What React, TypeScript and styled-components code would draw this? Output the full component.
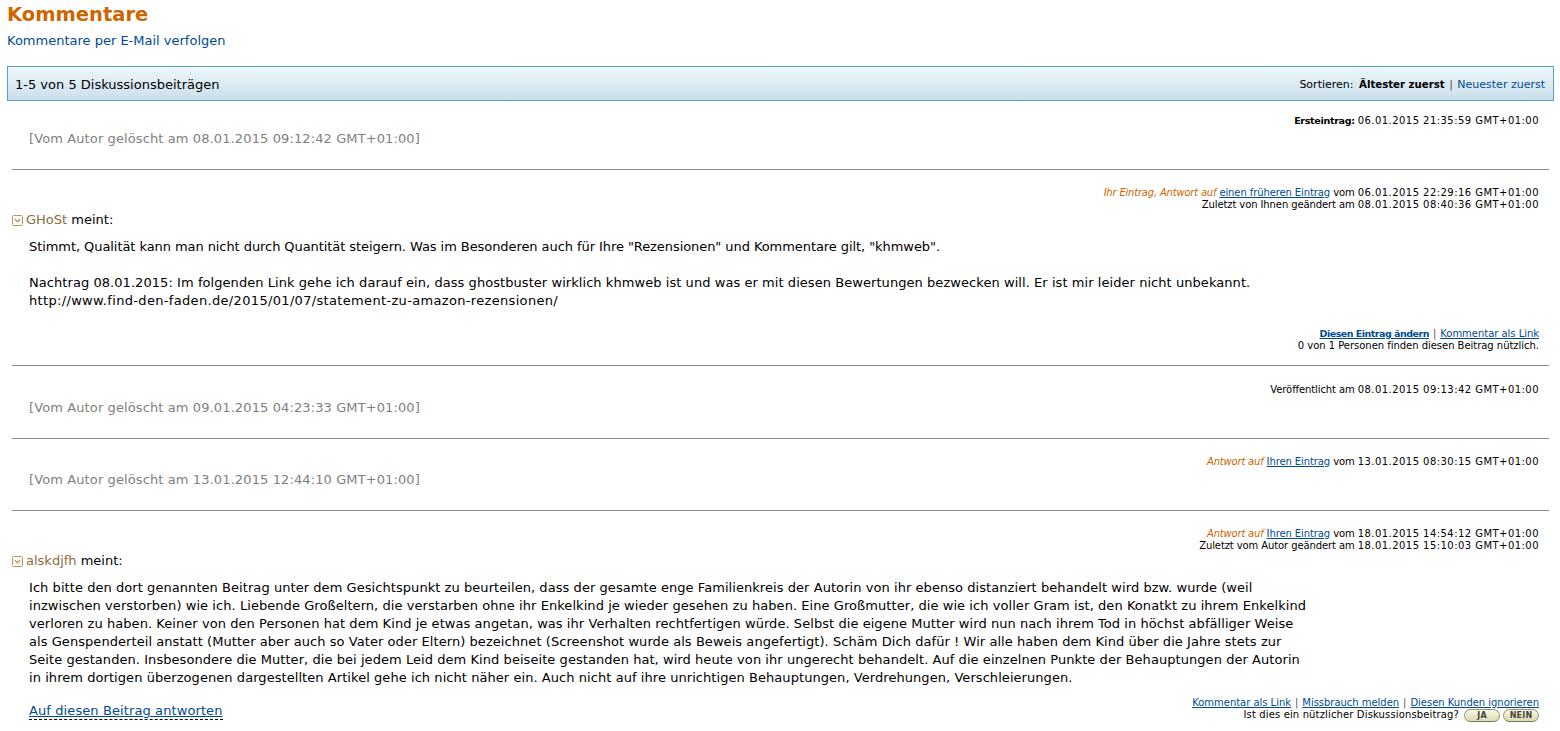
import React from "react";
import styled, { createGlobalStyle } from "styled-components";

const Global = createGlobalStyle`
  html, body { margin: 0; padding: 0; background: #fff; }
  body { font-family: "DejaVu Sans", Verdana, sans-serif; color: #000; }
  a { color: #004b91; }
`;

const Page = styled.div`
  width: 1560px;
  height: 731px;
  overflow: hidden;
  box-sizing: border-box;
  padding: 0 6px 0 7px;
`;

const Title = styled.h1`
  margin: 0;
  padding-top: 2px;
  height: 25px;
  font-size: 19.5px;
  line-height: 25px;
  font-weight: bold;
  color: #cc6600;
`;

const Follow = styled.a`
  display: block;
  margin-top: 6px;
  height: 16px;
  font-size: 13px;
  line-height: 16px;
  text-decoration: none;
`;

const Bar = styled.div`
  margin-top: 17px;
  height: 33px;
  box-sizing: content-box;
  border: 1px solid #5a9fc8;
  background: linear-gradient(#eef8fd, #c9deeb);
  padding: 2px 8px 0 7px;
  height: 31px;
  display: flex;
  align-items: center;
  justify-content: space-between;
  font-size: 13px;
  line-height: 16px;
`;

const Sort = styled.div`
  font-size: 11px;
  b { margin-left: 2px; font-size: 10.2px; }
  a { text-decoration: none; }
`;

const Sep = styled.span<{ $gap: number }>`
  color: #555;
  margin: 0 ${(p) => p.$gap}px;
`;

const Post = styled.section<{ $h: number }>`
  margin: 0 5px;
  padding: 0 10px 0 0;
  height: ${(p) => p.$h}px;
  box-sizing: border-box;
  border-bottom: 1px solid #888;
  display: flex;
  flex-direction: column;
  &:last-child { border-bottom: 0; }
`;

const Meta = styled.div<{ $top: number }>`
  margin-top: ${(p) => p.$top}px;
  text-align: right;
  font-size: 10px;
  line-height: 12px;
  letter-spacing: -0.1px;
  a { color: #004b91; }
  b { font-size: 9.5px; letter-spacing: -0.3px; }
`;

const Stamp = styled.span`
  letter-spacing: 0.45px;
`;

const Reply = styled.i`
  color: #cc6600;
  letter-spacing: -0.2px;
`;

const Deleted = styled.div`
  margin: 4px 0 0 17px;
  font-size: 13px;
  line-height: 16px;
  letter-spacing: 0.11px;
  color: #808080;
`;

const Author = styled.div`
  display: flex;
  align-items: center;
  gap: 3px;
  height: 16px;
  margin-top: 1px;
  font-size: 13px;
  line-height: 16px;
`;

const Name = styled.span`
  color: #8f6b3c;
`;

const Toggle = styled.svg`
  width: 11px;
  height: 11px;
  flex: none;
`;

const Body = styled.div`
  margin: 10px 0 0 17px;
  font-size: 13px;
  line-height: 18px;
  letter-spacing: 0.06px;
  white-space: pre-line;
`;

const Tuned = styled.span<{ $ls: number }>`
  letter-spacing: ${(p) => p.$ls}px;
`;

const Actions = styled.div<{ $top: number }>`
  margin-top: ${(p) => p.$top}px;
  text-align: right;
  font-size: 10px;
  line-height: 12px;
  letter-spacing: -0.03px;
  b { font-size: 9.5px; letter-spacing: -0.5px; }
`;

const Footer = styled.div`
  display: flex;
  justify-content: space-between;
  align-items: flex-start;
  margin-top: 10px;
`;

const Answer = styled.a`
  margin: 6px 0 0 17px;
  font-size: 13px;
  line-height: 16px;
  letter-spacing: 0.1px;
  border-bottom: 1px dashed #000;
  height: 16px;
`;

const Vote = styled.button<{ $ml: number }>`
  display: inline-block;
  box-sizing: border-box;
  width: 36px;
  height: 13px;
  padding: 0;
  margin-left: ${(p) => p.$ml}px;
  border: 1px solid #9a9a78;
  border-bottom-color: #77775a;
  border-radius: 7px;
  background: linear-gradient(#faf9e2, #dcdab0);
  font: bold 8px/11px "DejaVu Sans", sans-serif;
  letter-spacing: 0.2px;
  color: #444;
  vertical-align: top;
`;

const ToggleIcon = () => (
  <Toggle viewBox="0 0 11 11">
    <rect x="0.5" y="0.5" width="10" height="10" rx="1" fill="#fdfaf2" stroke="#b39c72" />
    <path d="M3 4.2 L5.5 6.8 L8 4.2" fill="none" stroke="#a9823f" strokeWidth="1.1" />
  </Toggle>
);

export default function App() {
  return (
    <Page>
      <Global />
      <Title>Kommentare</Title>
      <Follow href="#">Kommentare per E-Mail verfolgen</Follow>
      <Bar>
        <span>1-5 von 5 Diskussionsbeiträgen</span>
        <Sort>
          Sortieren: <b>Ältester zuerst</b>
          <Sep $gap={4.5}>|</Sep>
          <a href="#">Neuester zuerst</a>
        </Sort>
      </Bar>

      <Post $h={69}>
        <Meta $top={14}>
          <b>Ersteintrag:</b> <Stamp>06.01.2015 21:35:59 GMT+01:00</Stamp>
        </Meta>
        <Deleted>[Vom Autor gelöscht am 08.01.2015 09:12:42 GMT+01:00]</Deleted>
      </Post>

      <Post $h={196}>
        <Meta $top={17}>
          <Reply>Ihr Eintrag, Antwort auf</Reply> <a href="#">einen früheren Eintrag</a> vom <Stamp>06.01.2015 22:29:16 GMT+01:00</Stamp>
          <br />
          Zuletzt von Ihnen geändert am <Stamp>08.01.2015 08:40:36 GMT+01:00</Stamp>
        </Meta>
        <Author>
          <ToggleIcon />
          <span><Name>GHoSt</Name> meint:</span>
        </Author>
        <Body>
          <Tuned $ls={-0.07}>{`Stimmt, Qualität kann man nicht durch Quantität steigern. Was im Besonderen auch für Ihre "Rezensionen" und Kommentare gilt, "khmweb".`}</Tuned>
          {`

Nachtrag 08.01.2015: Im folgenden Link gehe ich darauf ein, dass ghostbuster wirklich khmweb ist und was er mit diesen Bewertungen bezwecken will. Er ist mir leider nicht unbekannt.
`}
          <Tuned $ls={0.33}>http://www.find-den-faden.de/2015/01/07/statement-zu-amazon-rezensionen/</Tuned>
        </Body>
        <Actions $top={18}>
          <a href="#"><b>Diesen Eintrag ändern</b></a>
          <Sep $gap={4}>|</Sep>
          <a href="#">Kommentar als Link</a>
          <br />
          0 von 1 Personen finden diesen Beitrag nützlich.
        </Actions>
      </Post>

      <Post $h={73}>
        <Meta $top={18}>Veröffentlicht am <Stamp>08.01.2015 09:13:42 GMT+01:00</Stamp></Meta>
        <Deleted>[Vom Autor gelöscht am 09.01.2015 04:23:33 GMT+01:00]</Deleted>
      </Post>

      <Post $h={72}>
        <Meta $top={17}>
          <Reply>Antwort auf</Reply> <a href="#">Ihren Eintrag</a> vom <Stamp>13.01.2015 08:30:15 GMT+01:00</Stamp>
        </Meta>
        <Deleted>[Vom Autor gelöscht am 13.01.2015 12:44:10 GMT+01:00]</Deleted>
      </Post>

      <Post $h={221}>
        <Meta $top={17}>
          <Reply>Antwort auf</Reply> <a href="#">Ihren Eintrag</a> vom <Stamp>18.01.2015 14:54:12 GMT+01:00</Stamp>
          <br />
          Zuletzt vom Autor geändert am <Stamp>18.01.2015 15:10:03 GMT+01:00</Stamp>
        </Meta>
        <Author>
          <ToggleIcon />
          <span><Name>alskdjfh</Name> meint:</span>
        </Author>
        <Body>
          {`Ich bitte den dort genannten Beitrag unter dem Gesichtspunkt zu beurteilen, dass der gesamte enge Familienkreis der Autorin von ihr ebenso distanziert behandelt wird bzw. wurde (weil
inzwischen verstorben) wie ich. Liebende Großeltern, die verstarben ohne ihr Enkelkind je wieder gesehen zu haben. Eine Großmutter, die wie ich voller Gram ist, den Konatkt zu ihrem Enkelkind
verloren zu haben. Keiner von den Personen hat dem Kind je etwas angetan, was ihr Verhalten rechtfertigen würde. Selbst die eigene Mutter wird nun nach ihrem Tod in höchst abfälliger Weise
als Genspenderteil anstatt (Mutter aber auch so Vater oder Eltern) bezeichnet (Screenshot wurde als Beweis angefertigt). Schäm Dich dafür ! Wir alle haben dem Kind über die Jahre stets zur
Seite gestanden. Insbesondere die Mutter, die bei jedem Leid dem Kind beiseite gestanden hat, wird heute von ihr ungerecht behandelt. Auf die einzelnen Punkte der Behauptungen der Autorin
in ihrem dortigen überzogenen dargestellten Artikel gehe ich nicht näher ein. Auch nicht auf ihre unrichtigen Behauptungen, Verdrehungen, Verschleierungen.`}
        </Body>
        <Footer>
          <Answer href="#">Auf diesen Beitrag antworten</Answer>
          <Actions $top={0}>
            <a href="#">Kommentar als Link</a>
            <Sep $gap={4}>|</Sep>
            <a href="#">Missbrauch melden</a>
            <Sep $gap={4}>|</Sep>
            <a href="#">Diesen Kunden ignorieren</a>
            <br />
            <Tuned $ls={0.14}>Ist dies ein nützlicher Diskussionsbeitrag?</Tuned>
            <Vote $ml={5}>JA</Vote>
            <Vote $ml={3}>NEIN</Vote>
          </Actions>
        </Footer>
      </Post>
    </Page>
  );
}
